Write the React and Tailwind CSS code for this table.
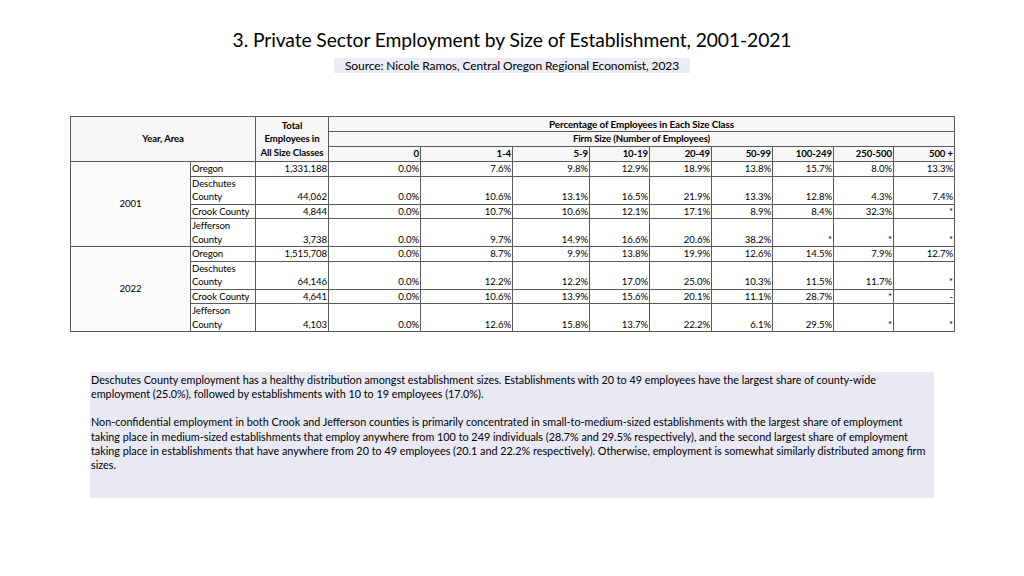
import React from 'react';

const sizes = ['0', '1-4', '5-9', '10-19', '20-49', '50-99', '100-249', '250-500', '500 +'];

const groups = [
  {
    year: '2001',
    rows: [
      { area: 'Oregon', total: '1,331,188', vals: ['0.0%', '7.6%', '9.8%', '12.9%', '18.9%', '13.8%', '15.7%', '8.0%', '13.3%'] },
      { area: 'Deschutes County', tall: true, total: '44,062', vals: ['0.0%', '10.6%', '13.1%', '16.5%', '21.9%', '13.3%', '12.8%', '4.3%', '7.4%'] },
      { area: 'Crook County', total: '4,844', vals: ['0.0%', '10.7%', '10.6%', '12.1%', '17.1%', '8.9%', '8.4%', '32.3%', '*'] },
      { area: 'Jefferson County', tall: true, total: '3,738', vals: ['0.0%', '9.7%', '14.9%', '16.6%', '20.6%', '38.2%', '*', '*', '*'] },
    ],
  },
  {
    year: '2022',
    rows: [
      { area: 'Oregon', total: '1,515,708', vals: ['0.0%', '8.7%', '9.9%', '13.8%', '19.9%', '12.6%', '14.5%', '7.9%', '12.7%'] },
      { area: 'Deschutes County', tall: true, total: '64,146', vals: ['0.0%', '12.2%', '12.2%', '17.0%', '25.0%', '10.3%', '11.5%', '11.7%', '*'] },
      { area: 'Crook County', total: '4,641', vals: ['0.0%', '10.6%', '13.9%', '15.6%', '20.1%', '11.1%', '28.7%', '*', '-'] },
      { area: 'Jefferson County', tall: true, total: '4,103', vals: ['0.0%', '12.6%', '15.8%', '13.7%', '22.2%', '6.1%', '29.5%', '*', '*'] },
    ],
  },
];

const colWidths = [120, 65, 73, 92, 92, 77, 60, 62, 61, 61, 60, 61];

const cell = 'border border-[#5a5a5a] px-px py-0 whitespace-nowrap overflow-hidden';

export default function App() {
  return (
    <div
      className="w-[1024px] h-[576px] bg-white text-black flex flex-col"
      style={{ fontFamily: 'Lato, "Liberation Sans", sans-serif' }}
    >
      {/* Title */}
      <h1 className="mt-[27px] text-center text-[19.3px] leading-[26px] font-normal tracking-[-0.1px]">
        3. Private Sector Employment by Size of Establishment, 2001-2021
      </h1>
      <div className="mt-[5px] flex justify-center">
        <div className="w-[356px] h-[15px] bg-[#ececf2] text-center text-[12px] leading-[15px] tracking-[-0.1px] whitespace-nowrap">
          Source: Nicole Ramos, Central Oregon Regional Economist, 2023
        </div>
      </div>

      {/* Table */}
      <div className="mt-[43px] pl-[70px]">
        <table className="table-fixed border-collapse w-[884px] text-[9.6px] tracking-[-0.1px]">
          <colgroup>
            {colWidths.map((w, i) => (
              <col key={i} style={{ width: w }} />
            ))}
          </colgroup>
          <thead>
            <tr className="h-[15px] bg-[#f6f6f6]">
              <th colSpan={2} rowSpan={3} className={`${cell} font-bold text-center align-middle leading-[14px]`}>
                Year, Area
              </th>
              <th rowSpan={3} className={`${cell} font-bold text-center align-middle leading-[13.5px]`}>
                Total
                <br />
                Employees in
                <br />
                All Size Classes
              </th>
              <th colSpan={9} className={`${cell} font-bold text-center leading-[14px] text-[9.9px]`}>
                Percentage of Employees in Each Size Class
              </th>
            </tr>
            <tr className="h-[15px] bg-[#f6f6f6]">
              <th colSpan={9} className={`${cell} font-bold text-center leading-[14px]`}>
                Firm Size (Number of Employees)
              </th>
            </tr>
            <tr className="h-[15px] bg-[#f6f6f6]">
              {sizes.map(s => (
                <th key={s} className={`${cell} font-bold text-right leading-[14px]`}>
                  {s}
                </th>
              ))}
            </tr>
          </thead>
          <tbody>
            {groups.map(g =>
              g.rows.map((r, i) => (
                <tr key={g.year + r.area} className={r.tall ? 'h-[28px] leading-[13.5px]' : 'h-[14px] leading-[13.5px]'}>
                  {i === 0 && (
                    <td rowSpan={4} className={`${cell} text-center align-middle bg-[#fbfbfb]`}>
                      {g.year}
                    </td>
                  )}
                  <td className={`${cell} text-left align-bottom`}>
                    {r.tall ? (
                      <>
                        {r.area.split(' ')[0]}
                        <br />
                        {r.area.split(' ')[1]}
                      </>
                    ) : (
                      r.area
                    )}
                  </td>
                  <td className={`${cell} text-right align-bottom`}>{r.total}</td>
                  {r.vals.map((v, j) => (
                    <td key={j} className={`${cell} text-right align-bottom`}>
                      {v}
                    </td>
                  ))}
                </tr>
              ))
            )}
          </tbody>
        </table>
      </div>

      {/* Commentary */}
      <div className="mt-[40px] ml-[90px] w-[844px] h-[126px] bg-[#e9e9f3] px-px pt-[1px] text-[10.8px] leading-[14.2px]">
        <p>
          Deschutes County employment has a healthy distribution amongst establishment sizes. Establishments with 20 to 49
          employees have the largest share of county-wide employment (25.0%), followed by establishments with 10 to 19
          employees (17.0%).
        </p>
        <p className="mt-[14px]">
          Non-confidential employment in both Crook and Jefferson counties is primarily concentrated in small-to-medium-sized
          establishments with the largest share of employment taking place in medium-sized establishments that employ
          anywhere from 100 to 249 individuals (28.7% and 29.5% respectively), and the second largest share of employment
          taking place in establishments that have anywhere from 20 to 49 employees (20.1 and 22.2% respectively). Otherwise,
          employment is somewhat similarly distributed among firm sizes.
        </p>
      </div>
    </div>
  );
}
